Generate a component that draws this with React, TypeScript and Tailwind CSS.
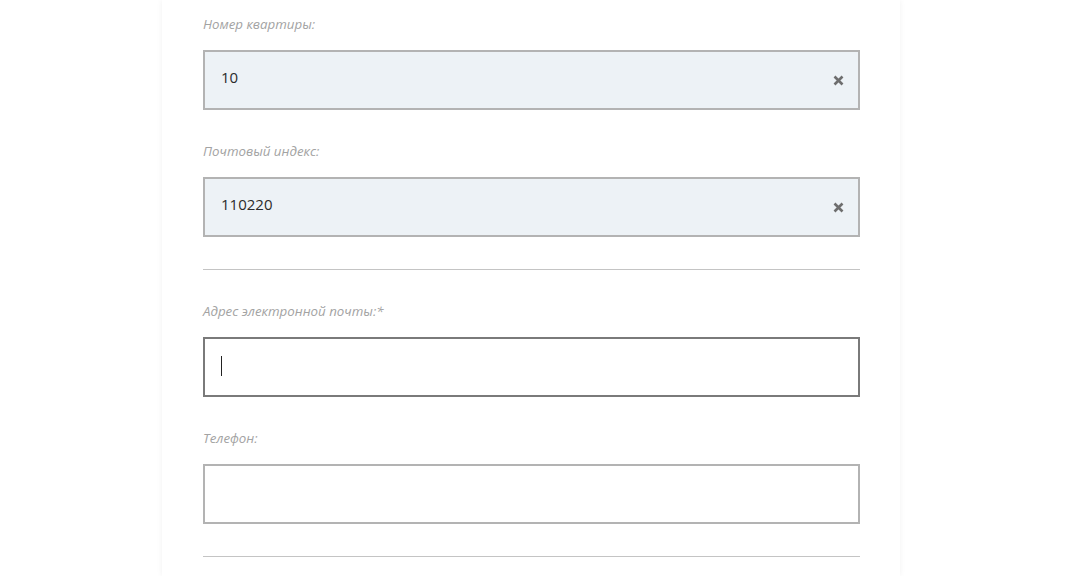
import React from "react";

const labelCls =
  "block h-[18px] text-[13.3px] leading-[18px] italic text-[#a3a3a3] mb-[17px]";

function ClearIcon() {
  return (
    <svg width="11" height="11" viewBox="0 0 11 11" className="shrink-0">
      <path d="M1.5 1.5 L9.5 9.5 M9.5 1.5 L1.5 9.5" stroke="#6e6e6e" strokeWidth="2.6" strokeLinecap="butt" />
    </svg>
  );
}

function FilledField({ label, value, className = "" }: { label: string; value: string; className?: string }) {
  return (
    <div className={className}>
      <label className={labelCls}>{label}</label>
      <div className="flex h-[60px] items-center justify-between border-2 border-[#b3b3b3] bg-[#edf2f6] pl-4 pr-[14px]">
        <span className="pb-[5px] text-[15px] text-[#2b2b2b]">{value}</span>
        <ClearIcon />
      </div>
    </div>
  );
}

export default function App() {
  return (
    <div className="min-h-[576px] w-full bg-white" style={{ fontFamily: '"Open Sans", "Noto Sans", sans-serif' }}>
      <div className="ml-[162px] w-[738px] min-h-[576px] bg-white px-[41px] pr-[40px] pt-[15px] shadow-[0_0_6px_rgba(0,0,0,0.06)]">
        <FilledField label="Номер квартиры:" value="10" />
        <FilledField label="Почтовый индекс:" value="110220" className="mt-[32px]" />
        <div className="mt-[32px] h-px bg-[#c4c4c4]" />
        <div className="mt-[32px]">
          <label className={labelCls}>Адрес электронной почты:*</label>
          <div className="flex h-[60px] items-center border-2 border-[#7a7a7a] bg-white pl-4">
            <span className="mb-[2px] block h-[20px] w-px bg-[#222]" />
          </div>
        </div>
        <div className="mt-[32px]">
          <label className={labelCls}>Телефон:</label>
          <div className="h-[60px] border-2 border-[#b3b3b3] bg-white" />
        </div>
        <div className="mt-[32px] h-px bg-[#c4c4c4]" />
      </div>
    </div>
  );
}
